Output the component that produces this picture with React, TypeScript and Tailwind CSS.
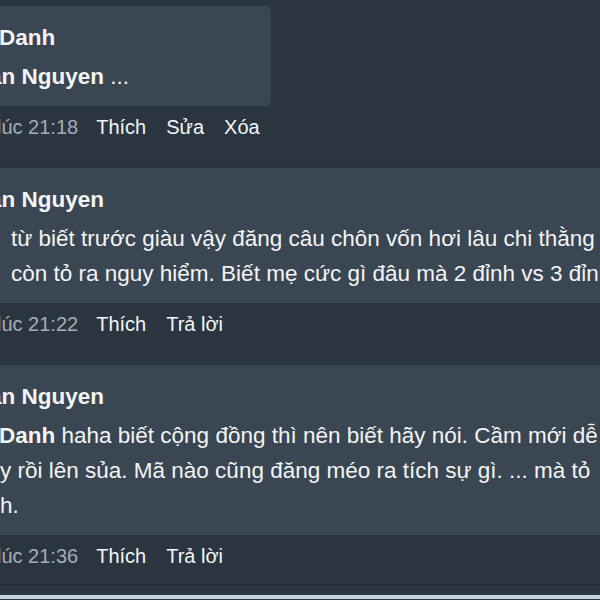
import { ReactNode } from 'react'

type Action = { label: string }

const Bubble = ({ children, wide }: { children: ReactNode; wide?: boolean }) => (
  <div
    className={
      wide
        ? 'bg-[#3a4652] pt-[14px] pb-[12px] border-t border-[#27313b]'
        : 'w-[271px] rounded-r-[5px] bg-[#3a4652] pt-[14px] pb-[12px]'
    }
  >
    {children}
  </div>
)

const Actions = ({ time, items, last }: { time: string; items: Action[]; last?: boolean }) => (
  <div
    className={
      last
        ? 'flex gap-[20px] whitespace-nowrap pt-[8px] pb-[15px] text-[20px] leading-[26px]'
        : 'flex gap-[20px] whitespace-nowrap pt-[8px] pb-[27px] text-[20px] leading-[26px]'
    }
  >
    <span className="-ml-[3px] -mr-[2px] text-[#a4adb6]">{time}</span>
    {items.map((a) => (
      <span key={a.label} className="text-[#f2f4f6]">
        {a.label}
      </span>
    ))}
  </div>
)

const App = () => {
  return (
    <div className="h-[600px] w-[600px] overflow-hidden bg-[#2a3540] pt-[6px] font-['Liberation_Sans',Arial,sans-serif] text-[22.5px] text-[#f2f4f6]">
      {/* comment 1 */}
      <Bubble>
        <p className="-ml-[1px] whitespace-nowrap font-bold leading-[35px]">Danh</p>
        <p className="mt-[4px] -ml-[11px] whitespace-nowrap font-bold leading-[35px]">
          an Nguyen <span className="font-normal">...</span>
        </p>
      </Bubble>
      <Actions time="lúc 21:18" items={[{ label: 'Thích' }, { label: 'Sửa' }, { label: 'Xóa' }]} />

      {/* comment 2 */}
      <Bubble wide>
        <p className="-ml-[11px] whitespace-nowrap font-bold leading-[35px]">an Nguyen</p>
        <div className="mt-[4px] whitespace-nowrap leading-[35px]">
          <p className="pl-[11px]">từ biết trước giàu vậy đăng câu chôn vốn hơi lâu chi thằng</p>
          <p className="pl-[11px]">còn tỏ ra nguy hiểm. Biết mẹ cức gì đâu mà 2 đỉnh vs 3 đỉnh</p>
        </div>
      </Bubble>
      <Actions time="lúc 21:22" items={[{ label: 'Thích' }, { label: 'Trả lời' }]} />

      {/* comment 3 */}
      <Bubble wide>
        <p className="-ml-[11px] whitespace-nowrap font-bold leading-[35px]">an Nguyen</p>
        <div className="mt-[4px] whitespace-nowrap leading-[35px]">
          <p className="-ml-[1px]">
            <span className="font-bold">Danh</span> haha biết cộng đồng thì nên biết hãy nói. Cầm mới dễ
          </p>
          <p>y rồi lên sủa. Mã nào cũng đăng méo ra tích sự gì. ... mà tỏ</p>
          <p>h.</p>
        </div>
      </Bubble>
      <Actions time="lúc 21:36" items={[{ label: 'Thích' }, { label: 'Trả lời' }]} last />

      <div className="h-px bg-[#222c35]" />
      <div className="mt-[10px] h-[4px] bg-[#c6d2de]" />
    </div>
  )
}

export default App
